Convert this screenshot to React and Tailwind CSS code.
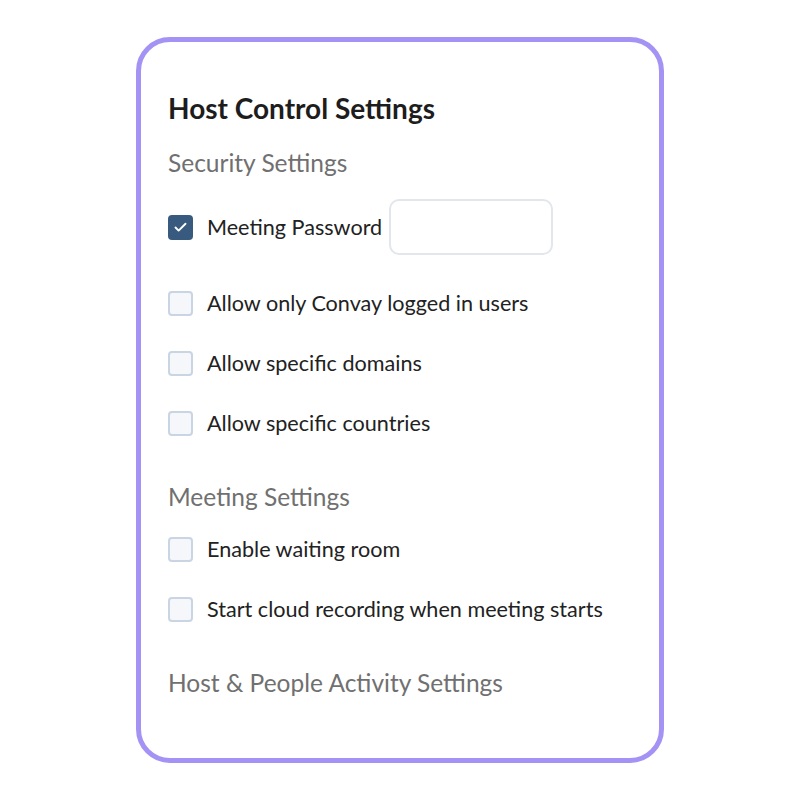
import { Check } from "lucide-react";

function Box({ checked }) {
  return checked ? (
    <span className="flex h-[25px] w-[25px] shrink-0 items-center justify-center rounded-[4px] bg-[#385a7f]">
      <Check size={15} strokeWidth={3} className="text-white" />
    </span>
  ) : (
    <span className="h-[25px] w-[25px] shrink-0 rounded-[4px] border-2 border-[#c9d5e2] bg-[#f5f7fb]" />
  );
}

function Row({ label, checked, className = "" }) {
  return (
    <label className={`flex h-[28px] items-center gap-[14px] ${className}`}>
      <Box checked={checked} />
      <span className="text-[21.6px] leading-[28px] text-[#222]">{label}</span>
    </label>
  );
}

export default function App() {
  return (
    <div
      className="min-h-[800px] bg-white pt-[37px]"
      style={{ fontFamily: "Lato, 'Open Sans', sans-serif" }}
    >
      <div className="mx-auto h-[726px] w-[528px] rounded-[34px] border-[5px] border-[#a493f4] bg-white pl-[27px] pr-[20px] pt-[50px]">
        <h1 className="text-[28px] font-bold leading-[32px] text-[#1d1d1d]">
          Host Control Settings
        </h1>
        <h2 className="mt-[24px] text-[24.5px] leading-[30px] text-[#707070]">
          Security Settings
        </h2>

        <div className="mt-[21px] flex h-[56px] items-center gap-[14px]">
          <Box checked />
          <span className="text-[21.6px] leading-[28px] text-[#222]">Meeting Password</span>
          <input
            type="text"
            className="-ml-[7px] h-[56px] w-[164px] rounded-[10px] border-2 border-[#e3e7ec] bg-white outline-none"
          />
        </div>

        <Row className="mt-[34px]" label="Allow only Convay logged in users" />
        <Row className="mt-[32px]" label="Allow specific domains" />
        <Row className="mt-[32px]" label="Allow specific countries" />

        <h2 className="mt-[45px] text-[24.5px] leading-[30px] text-[#707070]">
          Meeting Settings
        </h2>
        <Row className="mt-[23px]" label="Enable waiting room" />
        <Row className="mt-[32px]" label="Start cloud recording when meeting starts" />

        <h2 className="mt-[45px] text-[24.5px] leading-[30px] text-[#707070]">
          Host &amp; People Activity Settings
        </h2>
      </div>
    </div>
  );
}
